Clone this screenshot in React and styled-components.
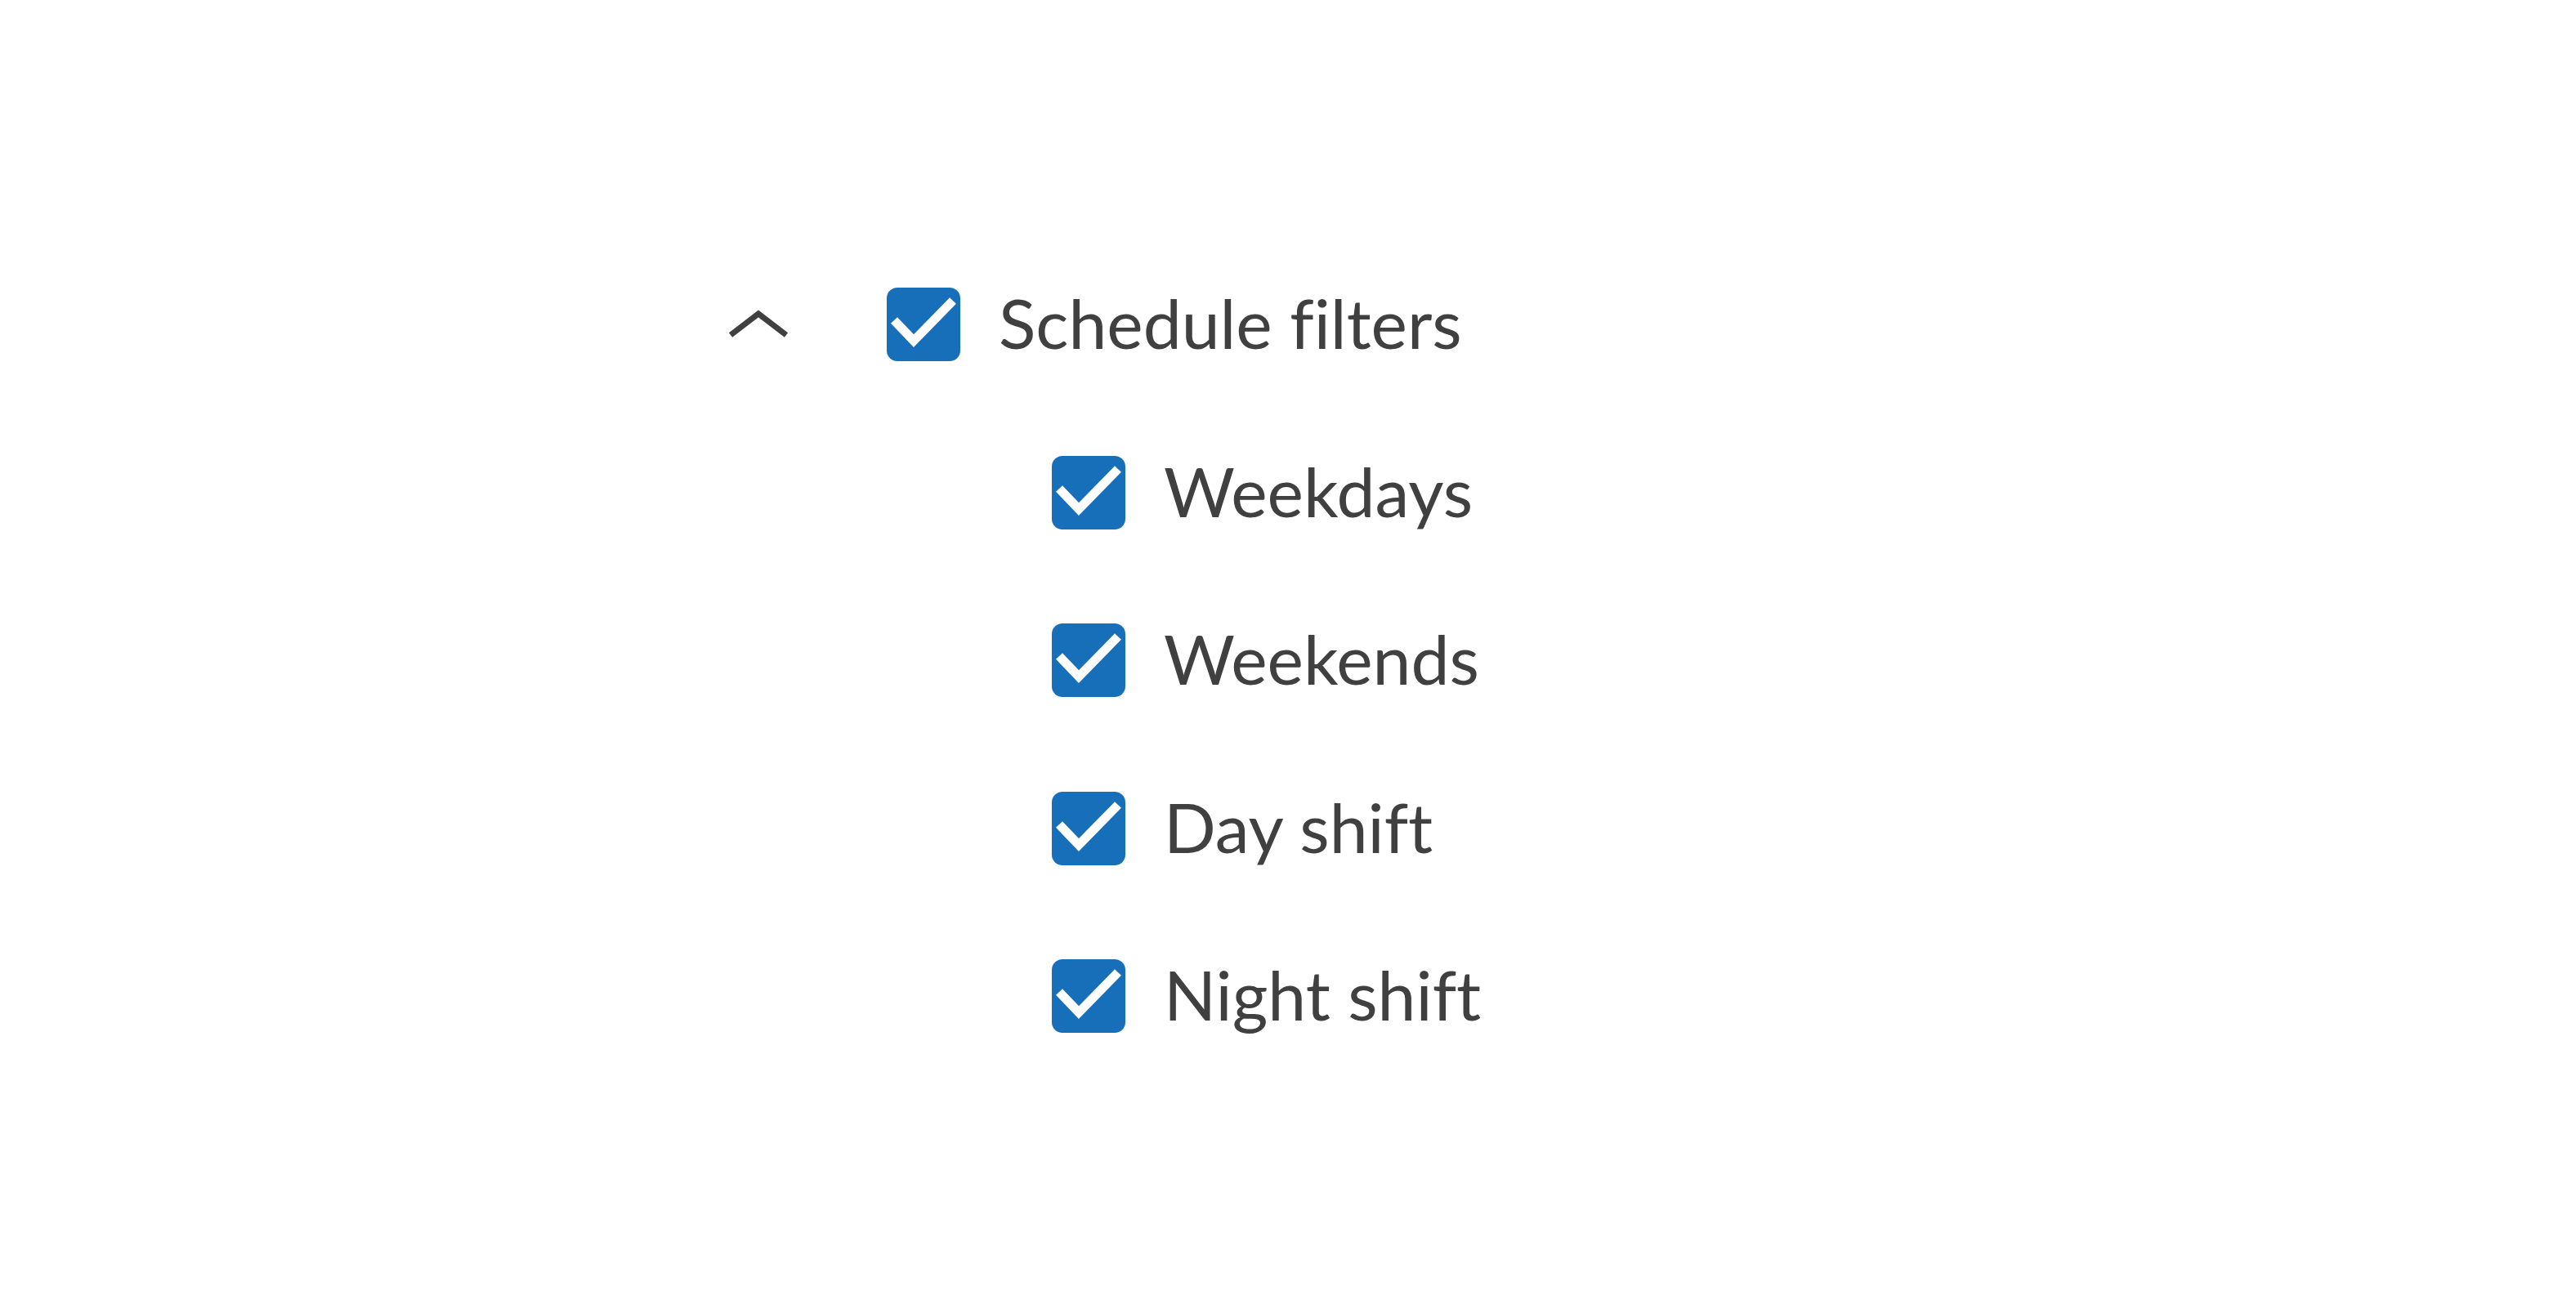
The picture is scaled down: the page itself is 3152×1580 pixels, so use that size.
import React, { useState } from "react"
import styled, { createGlobalStyle } from "styled-components"

const colors = {
  text: "#404040",
  blue: "#166fb8",
  white: "#ffffff",
}

const GlobalStyle = createGlobalStyle`
  html, body {
    margin: 0;
    padding: 0;
    background: ${colors.white};
  }
  body {
    font-family: Lato, "Open Sans", "Liberation Sans", sans-serif;
    color: ${colors.text};
  }
`

const Page = styled.div`
  min-height: 1580px;
  padding: 352px 0 0 883px;
  box-sizing: border-box;
`

const Tree = styled.div`
  display: flex;
  flex-direction: column;
  gap: 115.5px;
`

const Row = styled.div`
  display: flex;
  align-items: center;
  height: 90px;
  padding-left: ${(p) => p.indent || 0}px;
`

const Toggle = styled.button`
  width: 90px;
  height: 90px;
  margin-right: 112px;
  padding: 0;
  border: none;
  background: none;
  display: flex;
  align-items: center;
  justify-content: center;
  cursor: pointer;
  svg {
    transform: ${(p) => (p.open ? "none" : "rotate(180deg)")};
  }
`

const Box = styled.span`
  width: 90px;
  height: 90px;
  flex: none;
  border-radius: 13px;
  background: ${(p) => (p.checked ? colors.blue : colors.white)};
  border: ${(p) => (p.checked ? "none" : `3px solid ${colors.text}`)};
  box-sizing: border-box;
  display: flex;
  align-items: center;
  justify-content: center;
  cursor: pointer;
`

const Label = styled.span`
  margin-left: 47px;
  font-size: 84px;
  line-height: 90px;
  font-weight: 400;
  font-variant-ligatures: none;
  color: ${colors.text};
  white-space: nowrap;
  position: relative;
  top: -2px;
`

const Chevron = () => (
  <svg width="78" height="38" viewBox="0 0 78 38">
    <polyline
      points="5,32 39,6 73,32"
      fill="none"
      stroke={colors.text}
      strokeWidth="7"
    />
  </svg>
)

const Check = () => (
  <svg width="90" height="90" viewBox="0 0 90 90">
    <polyline
      points="9,40 33,65 81,16"
      fill="none"
      stroke={colors.white}
      strokeWidth="11"
    />
  </svg>
)

const Checkbox = ({ checked, label, onClick }) => (
  <>
    <Box checked={checked} onClick={onClick}>
      {checked && <Check />}
    </Box>
    <Label>{label}</Label>
  </>
)

const items = ["Weekdays", "Weekends", "Day shift", "Night shift"]

const App = () => {
  const [open, setOpen] = useState(true)
  const [checked, setChecked] = useState(items.map(() => true))
  const allChecked = checked.every(Boolean)

  return (
    <Page>
      <GlobalStyle />
      <Tree>
        <Row>
          <Toggle open={open} onClick={() => setOpen(!open)}>
            <Chevron />
          </Toggle>
          <Checkbox
            checked={allChecked}
            label="Schedule filters"
            onClick={() => setChecked(items.map(() => !allChecked))}
          />
        </Row>
        {open &&
          items.map((item, i) => (
            <Row key={item} indent={404}>
              <Checkbox
                checked={checked[i]}
                label={item}
                onClick={() =>
                  setChecked(checked.map((c, j) => (j === i ? !c : c)))
                }
              />
            </Row>
          ))}
      </Tree>
    </Page>
  )
}

export default App
